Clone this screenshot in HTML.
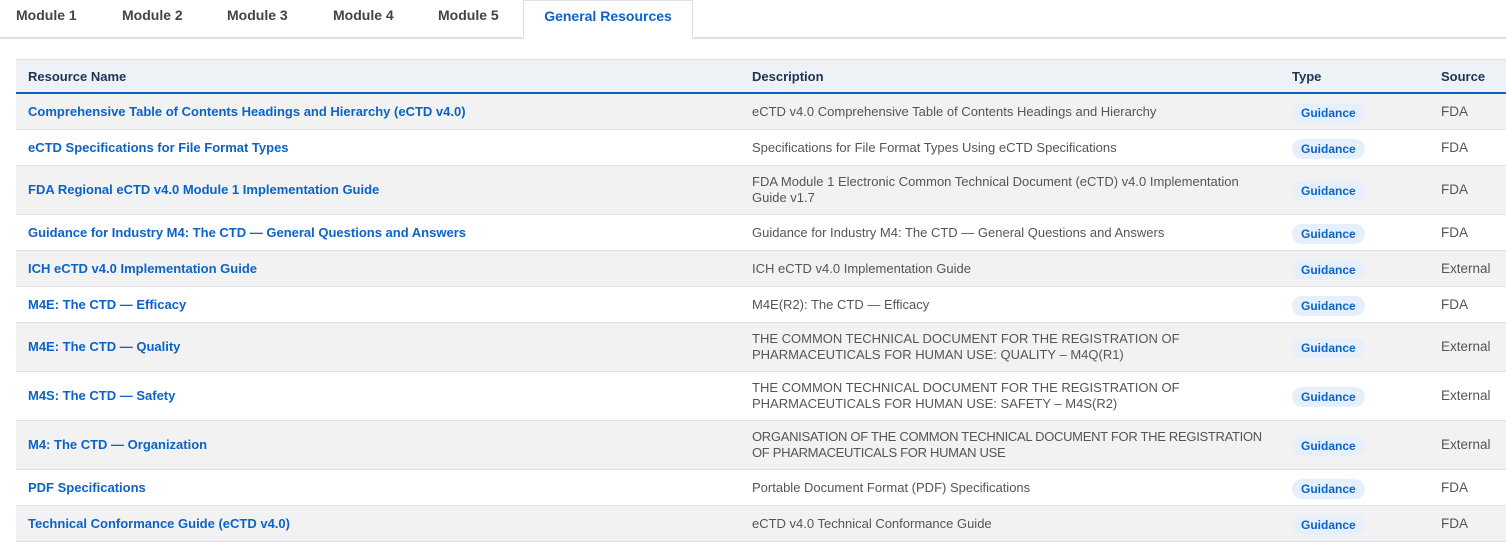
<!DOCTYPE html>
<html><head><meta charset="utf-8"><style>
body{margin:0;background:#fff;font-family:"Liberation Sans",Arial,sans-serif;width:1506px;height:546px;overflow:hidden}
.tabs{height:37px;border-bottom:2px solid #dde1e5;position:relative}
.tab{position:absolute;top:0;height:37px;line-height:30px;font-size:14px;font-weight:bold;color:#444}
.tab.active{border:1px solid #dde1e5;border-bottom:2px solid #fff;background:#fff;color:#0b63c8;box-sizing:border-box;height:39px;left:523px;width:170px;text-align:center}
table{position:absolute;left:16px;top:59px;width:1490px;border-collapse:collapse;table-layout:fixed}
th{background:#eef2f6;height:32px;border-top:1px solid #dde1e5;border-bottom:2px solid #0b63c8;text-align:left;font-size:13px;color:#1b3556;padding:0 0 0 12px}
td{border-bottom:1px solid #dde1e5;font-size:13.5px;color:#555;padding:0 0 0 12px;height:35px;line-height:16px;white-space:nowrap}
tr.two td{height:48px}
tbody tr:nth-child(odd) td{background:#f2f2f2}
td.n{color:#0b63c8;font-weight:bold;font-size:13px}
td.d{font-size:13px}
.b{display:inline-block;vertical-align:middle;margin-top:2px;background:#e6f0fc;color:#0b63c8;font-weight:bold;font-size:12px;padding:0 9px;height:20px;line-height:20px;border-radius:10px}
</style></head><body>
<div class="tabs">
<div class="tab" style="left:16px">Module 1</div>
<div class="tab" style="left:122px">Module 2</div>
<div class="tab" style="left:227px">Module 3</div>
<div class="tab" style="left:333px">Module 4</div>
<div class="tab" style="left:438px">Module 5</div>
<div class="tab active">General Resources</div>
</div>
<table>
<colgroup><col style="width:724px"><col style="width:540px"><col style="width:149px"><col></colgroup>
<thead><tr><th>Resource Name</th><th>Description</th><th>Type</th><th>Source</th></tr></thead>
<tbody>
<tr><td class="n">Comprehensive Table of Contents Headings and Hierarchy (eCTD v4.0)</td><td class="d">eCTD v4.0 Comprehensive Table of Contents Headings and Hierarchy</td><td><span class="b">Guidance</span></td><td>FDA</td></tr>
<tr><td class="n">eCTD Specifications for File Format Types</td><td class="d">Specifications for File Format Types Using eCTD Specifications</td><td><span class="b">Guidance</span></td><td>FDA</td></tr>
<tr class="two"><td class="n">FDA Regional eCTD v4.0 Module 1 Implementation Guide</td><td class="d">FDA Module 1 Electronic Common Technical Document (eCTD) v4.0 Implementation<br>Guide v1.7</td><td><span class="b">Guidance</span></td><td>FDA</td></tr>
<tr><td class="n">Guidance for Industry M4: The CTD — General Questions and Answers</td><td class="d">Guidance for Industry M4: The CTD — General Questions and Answers</td><td><span class="b">Guidance</span></td><td>FDA</td></tr>
<tr><td class="n">ICH eCTD v4.0 Implementation Guide</td><td class="d">ICH eCTD v4.0 Implementation Guide</td><td><span class="b">Guidance</span></td><td>External</td></tr>
<tr><td class="n">M4E: The CTD — Efficacy</td><td class="d">M4E(R2): The CTD — Efficacy</td><td><span class="b">Guidance</span></td><td>FDA</td></tr>
<tr class="two"><td class="n">M4E: The CTD — Quality</td><td class="d">THE COMMON TECHNICAL DOCUMENT FOR THE REGISTRATION OF<br>PHARMACEUTICALS FOR HUMAN USE: QUALITY – M4Q(R1)</td><td><span class="b">Guidance</span></td><td>External</td></tr>
<tr class="two"><td class="n">M4S: The CTD — Safety</td><td class="d">THE COMMON TECHNICAL DOCUMENT FOR THE REGISTRATION OF<br>PHARMACEUTICALS FOR HUMAN USE: SAFETY – M4S(R2)</td><td><span class="b">Guidance</span></td><td>External</td></tr>
<tr class="two"><td class="n">M4: The CTD — Organization</td><td class="d" style="letter-spacing:-0.3px">ORGANISATION OF THE COMMON TECHNICAL DOCUMENT FOR THE REGISTRATION<br>OF PHARMACEUTICALS FOR HUMAN USE</td><td><span class="b">Guidance</span></td><td>External</td></tr>
<tr><td class="n">PDF Specifications</td><td class="d">Portable Document Format (PDF) Specifications</td><td><span class="b">Guidance</span></td><td>FDA</td></tr>
<tr><td class="n">Technical Conformance Guide (eCTD v4.0)</td><td class="d">eCTD v4.0 Technical Conformance Guide</td><td><span class="b">Guidance</span></td><td>FDA</td></tr>
</tbody></table>
</body></html>
